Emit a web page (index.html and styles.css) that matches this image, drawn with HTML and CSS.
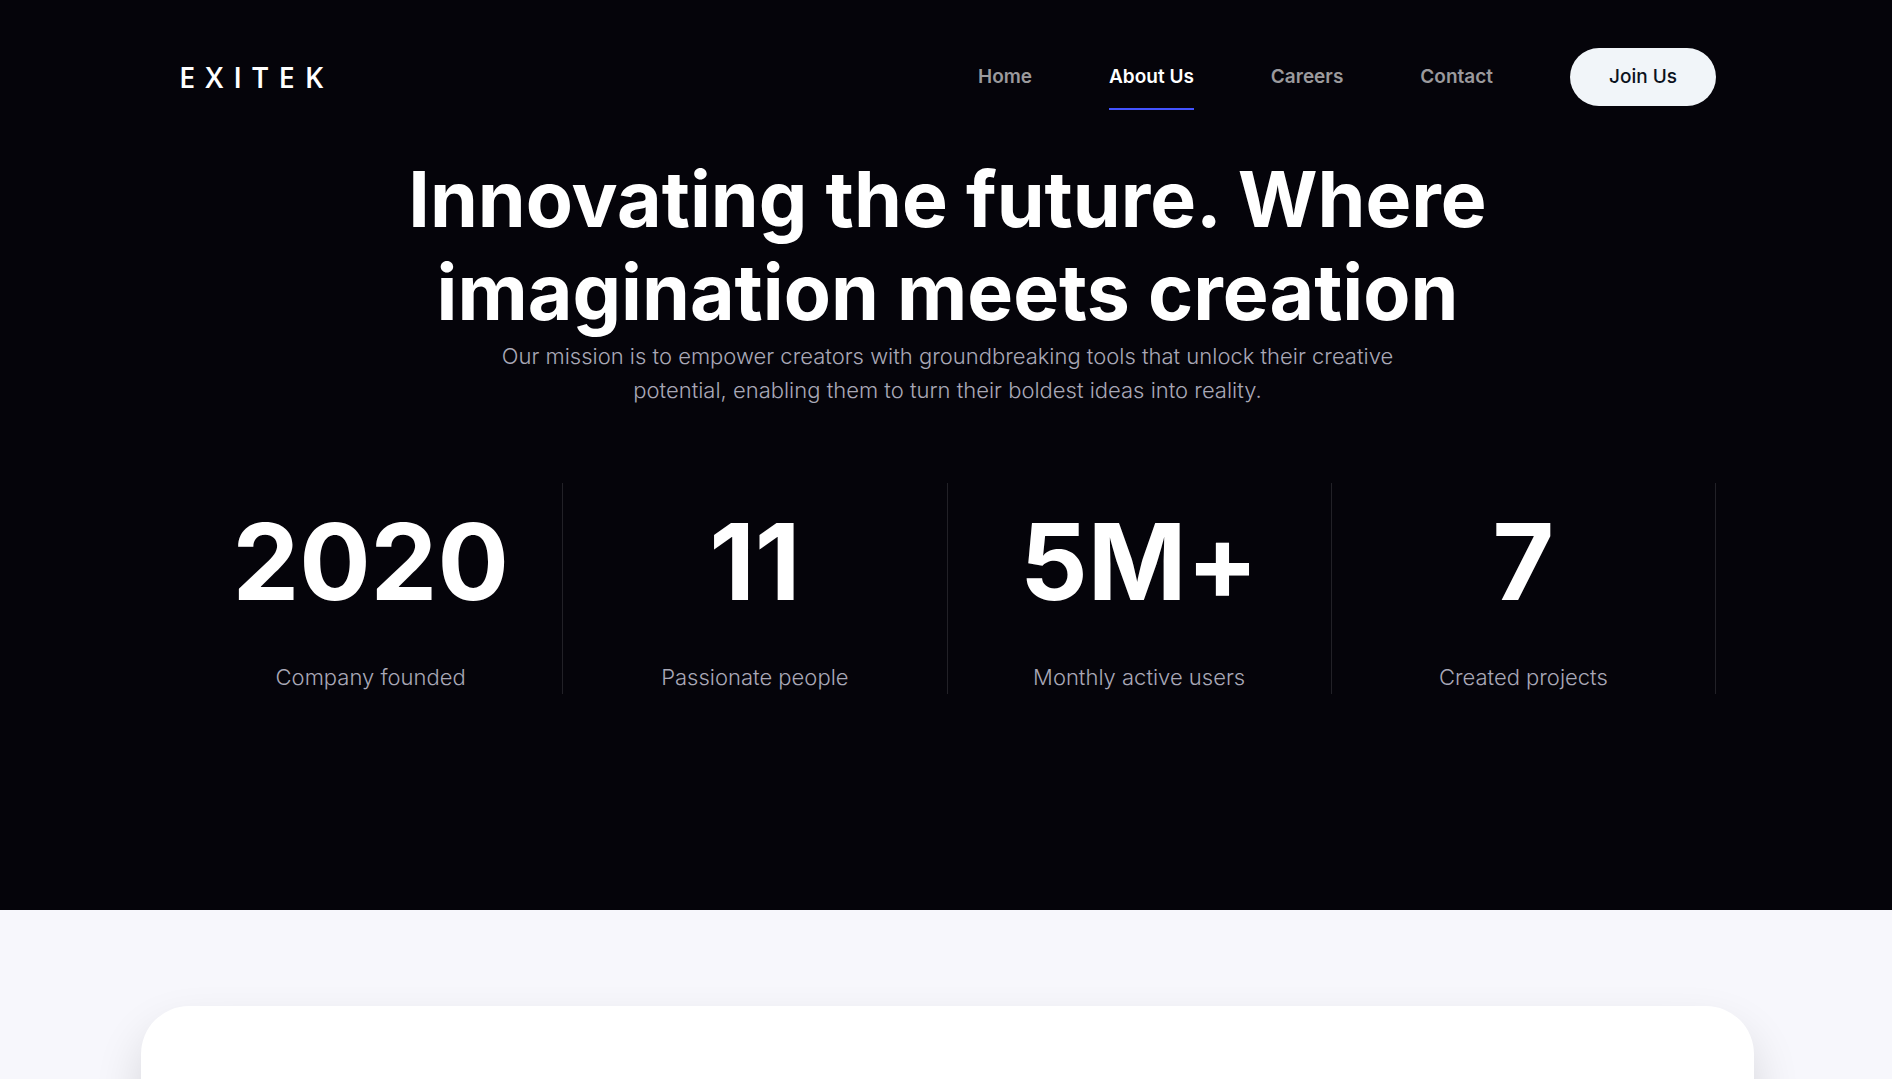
FILE: index.html
```html
<!DOCTYPE html>
<html lang="en">
<head>
<meta charset="utf-8">
<title>Exitek – About Us</title>
<meta name="viewport" content="width=device-width, initial-scale=1">
<link rel="stylesheet" href="styles.css">
</head>
<body>
<div class="hero">
  <header class="header container">
    <a class="logo" href="#">EXITEK</a>
    <nav class="nav">
      <a class="nav-link" href="#">Home</a>
      <a class="nav-link active" href="#" aria-current="page">About Us</a>
      <a class="nav-link" href="#">Careers</a>
      <a class="nav-link" href="#">Contact</a>
      <button class="join" type="button">Join Us</button>
    </nav>
  </header>
  <section class="intro container">
    <h1 class="title">Innovating the future. Where imagination meets creation</h1>
    <p class="lead">Our mission is to empower creators with groundbreaking tools that unlock their creative potential, enabling them to turn their boldest ideas into reality.</p>
  </section>
  <section class="stats container">
    <div class="stat"><strong class="value">2020</strong><span class="label">Company founded</span></div>
    <div class="stat"><strong class="value">11</strong><span class="label">Passionate people</span></div>
    <div class="stat"><strong class="value">5M+</strong><span class="label">Monthly active users</span></div>
    <div class="stat"><strong class="value">7</strong><span class="label">Created projects</span></div>
  </section>
</div>
<main class="content">
  <section class="card"></section>
</main>
</body>
</html>
```
FILE: styles.css
```css
* { box-sizing: border-box; }
body {
  margin: 0;
  background: #f7f7fc;
  color: #fff;
  font-family: Inter, "Liberation Sans", sans-serif;
}
.hero {
  background: #05040a;
  padding: 44px 0 216px;
}
.container {
  max-width: 1540px;
  margin: 0 auto;
  padding-left: 3px;
}
.header {
  display: flex;
  align-items: center;
  justify-content: space-between;
}
.logo {
  color: #fff;
  font: 600 29px/38px "Open Sans", sans-serif;
  letter-spacing: 10px;
  text-decoration: none;
}
.nav {
  display: flex;
  align-items: center;
  gap: 77px;
}
.nav-link {
  color: #9b9a9d;
  font-size: 19px;
  font-weight: 600;
  line-height: 62px;
  border: solid transparent;
  border-width: 2px 0;
  text-decoration: none;
}
.nav-link.active {
  color: #fff;
  border-bottom-color: #4353ff;
}
.join {
  height: 58px;
  padding: 0 39px;
  border: 0;
  border-radius: 29px;
  background: #f1f5f9;
  color: #0b1220;
  font: 500 19px/58px Inter, sans-serif;
}
.intro { text-align: center; }
.title {
  max-width: 1152px;
  margin: 43px auto 0;
  font-size: 77px;
  font-weight: 700;
  line-height: 93px;
}
.lead {
  max-width: 920px;
  margin: 0 auto;
  color: #a9a8b7;
  font-size: 22px;
  font-weight: 300;
  line-height: 34px;
}
.stats {
  display: grid;
  grid-template-columns: repeat(4, 1fr);
  margin-top: 76px;
}
.stat {
  display: flex;
  flex-direction: column;
  align-items: center;
  gap: 19px;
  border-right: 1px solid #222127;
}
.value {
  font-size: 106px;
  font-weight: 700;
  line-height: 158px;
  font-kerning: none;
  font-feature-settings: "calt" 0, "tnum" 0;
}
.label {
  color: #a9a8b7;
  font-size: 22px;
  font-weight: 300;
  line-height: 34px;
}
.content { padding: 96px 138px 96px 141px; }
.card {
  min-height: 600px;
  border-radius: 48px;
  background: #fff;
  box-shadow: 0 24px 48px rgba(0, 0, 0, 0.14);
}
```
